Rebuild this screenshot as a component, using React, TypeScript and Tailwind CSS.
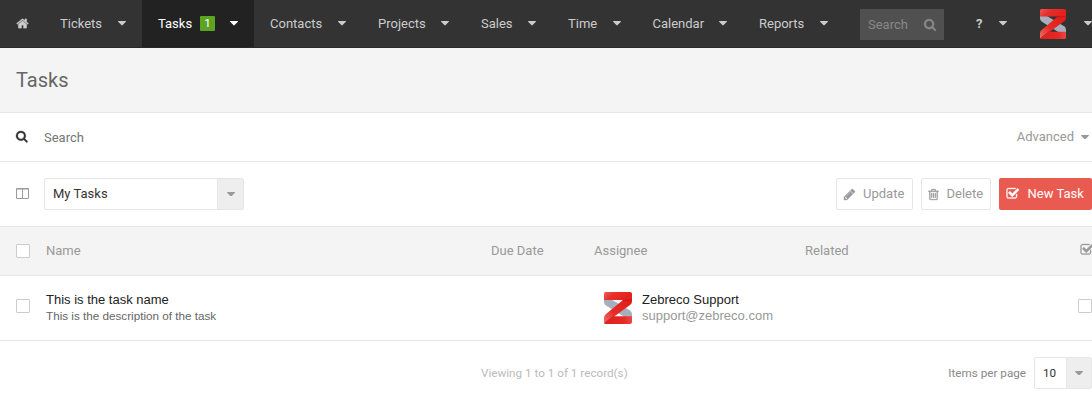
import React from "react";

const ICONS = {
  home: "M1472 992v480q0 26-19 45t-45 19h-384v-384h-256v384h-384q-26 0-45-19t-19-45v-480q0-1 .5-3t.5-3l575-474 575 474q1 2 1 6zm223-69l-62 74q-8 9-21 11h-3q-13 0-21-7l-692-577-692 577q-12 8-24 7-13-2-21-11l-62-74q-8-10-7-23.5t11-21.5l719-599q32-26 76-26t76 26l244 204v-195q0-14 9-23t23-9h192q14 0 23 9t9 23v408l219 182q10 8 11 21.5t-7 23.5z",
  search: "M1152 832q0-185-131.5-316.5t-316.5-131.5-316.5 131.5-131.5 316.5 131.5 316.5 316.5 131.5 316.5-131.5 131.5-316.5zm512 832q0 52-38 90t-90 38q-54 0-90-38l-343-342q-179 124-399 124-143 0-273.5-55.5t-225-150-150-225-55.5-273.5 55.5-273.5 150-225 225-150 273.5-55.5 273.5 55.5 225 150 150 225 55.5 273.5q0 220-124 399l343 343q37 37 37 90z",
  check: "M1472 930v318q0 119-84.5 203.5t-203.5 84.5h-832q-119 0-203.5-84.5t-84.5-203.5v-832q0-119 84.5-203.5t203.5-84.5h832q63 0 117 25 15 7 18 23 3 17-9 29l-49 49q-10 10-23 10-3 0-9-2-23-6-45-6h-832q-66 0-113 47t-47 113v832q0 66 47 113t113 47h832q66 0 113-47t47-113v-254q0-13 9-22l64-64q10-10 23-10 6 0 12 3 20 8 20 29zm231-489l-814 814q-24 24-57 24t-57-24l-430-430q-24-24-24-57t24-57l110-110q24-24 57-24t57 24l263 263 647-647q24-24 57-24t57 24l110 110q24 24 24 57t-24 57z",
  pencil: "M491 1536l91-91-235-235-91 91v107h128v128h107zm523-928q0-22-22-22-10 0-17 7l-542 542q-7 7-7 17 0 22 22 22 10 0 17-7l542-542q7-7 7-17zm-54-192l416 416-832 832h-416v-416zm683 96q0 53-37 90l-166 166-416-416 166-165q36-38 90-38 53 0 91 38l235 234q37 39 37 91z",
  trash: "M704 736v576q0 14-9 23t-23 9h-64q-14 0-23-9t-9-23v-576q0-14 9-23t23-9h64q14 0 23 9t9 23zm256 0v576q0 14-9 23t-23 9h-64q-14 0-23-9t-9-23v-576q0-14 9-23t23-9h64q14 0 23 9t9 23zm256 0v576q0 14-9 23t-23 9h-64q-14 0-23-9t-9-23v-576q0-14 9-23t23-9h64q14 0 23 9t9 23zm128 724v-948h-896v948q0 22 7 40.5t14.5 27 10.5 8.5h832q3 0 10.5-8.5t14.5-27 7-40.5zm-672-1076h448l-48-117q-7-9-17-11h-317q-10 2-17 11zm928 32v64q0 14-9 23t-23 9h-96v948q0 83-47 143.5t-113 60.5h-832q-66 0-113-58.5t-47-141.5v-952h-96q-14 0-23-9t-9-23v-64q0-14 9-23t23-9h309l70-167q15-37 54-63t79-26h320q40 0 79 26t54 63l70 167h309q14 0 23 9t9 23z",
};

function Icon({ name, className = "size-[13px]" }: { name: keyof typeof ICONS; className?: string }) {
  return (
    <svg
      viewBox="0 0 1792 1792"
      fill="currentColor"
      stroke="currentColor"
      strokeWidth="40"
      className={`shrink-0 overflow-visible ${className}`}
    >
      <path d={ICONS[name]} />
    </svg>
  );
}

function Caret({ className = "" }: { className?: string }) {
  return (
    <svg viewBox="384 640 1024 576" fill="currentColor" className={`h-[4.5px] w-2 shrink-0 ${className}`}>
      <path d="M1408 704q0 26-19 45l-448 448q-19 19-45 19t-45-19l-448-448q-19-19-19-45t19-45 45-19h896q26 0 45 19t19 45z" />
    </svg>
  );
}

function Logo({ id, className = "" }: { id: string; className?: string }) {
  return (
    <svg viewBox="0 0 28 32" preserveAspectRatio="none" className={`shrink-0 ${className}`}>
      <defs>
        <linearGradient id={`${id}-top`} x1="0" y1="0" x2="1" y2="0.3">
          <stop offset="0" stopColor="#f05a56" />
          <stop offset="0.4" stopColor="#e6302c" />
          <stop offset="1" stopColor="#e4201b" />
        </linearGradient>
        <linearGradient id={`${id}-mid`} x1="0" y1="1" x2="1" y2="0">
          <stop offset="0" stopColor="#f0706b" />
          <stop offset="0.4" stopColor="#e62b26" />
          <stop offset="1" stopColor="#e01b17" />
        </linearGradient>
        <linearGradient id={`${id}-low`} x1="0" y1="0" x2="1" y2="0">
          <stop offset="0" stopColor="#e11d19" />
          <stop offset="0.7" stopColor="#e62a26" />
          <stop offset="1" stopColor="#ea4844" />
        </linearGradient>
      </defs>
      <path d="M0 7.500h7.500L26 18.500q2 1.500 2 3.500v3h-7.500L2 13.500Q0 12 0 10z" fill="#a5afbd" />
      <path d="M0 31 9 24.200h19V30q0 2-2 2H1.500Q0 32 0 31z" fill={`url(#${id}-low)`} />
      <path d="M28 7v2.500q0 2-2 3.500L1 31.300Q0 31 0 30v-4.500q0-2 2-3.500L19 8z" fill={`url(#${id}-mid)`} />
      <path d="M1.500 0H26q2 0 2 2v6H0V2Q0 0 1.500 0z" fill={`url(#${id}-top)`} />
      <path d="m18.500 8.300 9-.3" stroke="#ae1917" strokeWidth="0.6" />
      <path d="m1 30.700 9-6.700" stroke="#a91c1a" strokeWidth="0.8" />
    </svg>
  );
}

type NavEntry = { label: string; width: string; badge?: number; active?: boolean };

function NavItem({ label, width, badge, active = false }: NavEntry) {
  return (
    <a className={`flex h-full shrink-0 items-center px-4 ${width} ${active ? "bg-[#222] text-white" : "text-[#ccc]"}`}>
      <span>{label}</span>
      {badge !== undefined && (
        <span className="ml-2 flex h-[15px] w-[15px] items-center justify-center rounded-[1px] bg-[#5da423] text-[11.7px] leading-none text-white">
          {badge}
        </span>
      )}
      <Caret className="ml-auto" />
    </a>
  );
}

function Checkbox() {
  return <span className="block size-3.5 shrink-0 rounded-[1px] border border-[#ccc] bg-white" />;
}

const NAV: NavEntry[] = [
  { label: "Tickets", width: "w-[98px]" },
  { label: "Tasks", width: "w-[112px]", badge: 1, active: true },
  { label: "Contacts", width: "w-[108px]" },
  { label: "Projects", width: "w-[103px]" },
  { label: "Sales", width: "w-[87px]" },
  { label: "Time", width: "w-[84.5px]" },
  { label: "Calendar", width: "w-[106.5px]" },
  { label: "Reports", width: "w-[101px]" },
];

const COLUMNS = "grid grid-cols-[46px_445px_103px_211px_273px_14px] items-center border-b border-[#e6e6e6]";

export default function App() {
  return (
    <div className="h-[417px] w-[1092px] overflow-hidden bg-white font-['Roboto',sans-serif] text-[13px] leading-4 text-[#999]">
      <nav className="flex h-12 items-center border-b border-[#2b282b] bg-[#333] text-[#ccc]">
        <a className="flex w-11 shrink-0 pl-[15.500px]">
          <Icon name="home" />
        </a>
        {NAV.map((item) => (
          <NavItem key={item.label} {...item} />
        ))}
        <div className="mt-0.5 ml-4 flex h-[31px] w-[84px] shrink-0 items-center justify-between rounded-[1px] bg-[#505050] pr-[7px] pl-2 text-[#888]">
          <span>Search</span>
          <Icon name="search" />
        </div>
        <a className="ml-4 flex h-full w-[63px] shrink-0 items-center px-4">
          <span className="font-bold">?</span>
          <Caret className="ml-auto" />
        </a>
        <a className="flex h-full shrink-0 items-center pl-[17px]">
          <Logo id="account" className="mt-px h-[30px] w-[26px]" />
          <Caret className="ml-[18px]" />
        </a>
      </nav>

      <header className="flex h-[65px] items-center border-b border-[#e6e6e6] bg-[#f4f4f4] pl-4">
        <h1 className="text-[20px] leading-6 text-[#666]">Tasks</h1>
      </header>

      <section className="flex h-[49px] items-center border-b border-[#e6e6e6] pr-[3px] pl-4">
        <Icon name="search" className="mb-0.5 size-[12.500px] text-[#333]" />
        <span className="mt-0.5 ml-[15.500px] text-[#757575]">Search</span>
        <span className="ml-auto">Advanced</span>
        <Caret className="ml-[7px]" />
      </section>

      <section className="flex h-[65px] items-center border-b border-[#e6e6e6]">
        <svg viewBox="0 0 13 12" className="ml-4 h-3 w-[13px] shrink-0" fill="none" stroke="#999">
          <rect x="0.5" y="0.5" width="12" height="10" rx="0.5" />
          <path d="M0 1h13M6.500 1v9.500" />
        </svg>
        <div className="ml-[15px] flex h-8 w-[200px] rounded-[2px] border border-[#e6e6e6]">
          <span className="flex flex-1 items-center pl-2 text-[#333]">My Tasks</span>
          <span className="flex w-[26px] items-center justify-center border-l border-[#e6e6e6] bg-[#eee]">
            <Caret />
          </span>
        </div>
        <div className="ml-auto flex gap-2">
          <button className="flex h-8 w-[77px] items-center rounded-[2px] border border-[#e6e6e6] pl-1.5">
            <Icon name="pencil" />
            <span className="ml-[7px]">Update</span>
          </button>
          <button className="flex h-8 w-[70px] items-center rounded-[2px] border border-[#e6e6e6] pl-[5px]">
            <Icon name="trash" />
            <span className="ml-[6.500px]">Delete</span>
          </button>
          <button className="flex h-8 w-[93px] items-center rounded-[2px] bg-[#e95a51] pl-[7px] text-white">
            <Icon name="check" className="mb-px size-[13.500px]" />
            <span className="ml-2">New Task</span>
          </button>
        </div>
      </section>

      <div className={`${COLUMNS} h-[49px] bg-[#f4f4f4]`}>
        <span className="pl-4"><Checkbox /></span>
        <span>Name</span>
        <span>Due Date</span>
        <span>Assignee</span>
        <span>Related</span>
        <Icon name="check" className="mb-0.5 ml-[1.500px] size-[13.500px]" />
      </div>

      <div className={`${COLUMNS} h-[65px] font-['Liberation_Sans',sans-serif]`}>
        <span className="pb-1 pl-4"><Checkbox /></span>
        <div>
          <div className="text-[#222]">This is the task name</div>
          <div className="text-[11.7px] text-[#666]">This is the description of the task</div>
        </div>
        <span />
        <div className="flex items-center pl-[10px]">
          <Logo id="assignee" className="h-8 w-7" />
          <div className="ml-2.5">
            <div className="text-[#222]">Zebreco Support</div>
            <div>support@zebreco.com</div>
          </div>
        </div>
        <span />
        <span className="pb-1"><Checkbox /></span>
      </div>

      <footer className="flex h-16 items-center text-[11.7px]">
        <span className="ml-[481px] text-[#bbb]">Viewing 1 to 1 of 1 record(s)</span>
        <span className="ml-auto text-[#888]">Items per page</span>
        <div className="ml-2 flex h-8 w-[58px] rounded-[2px] border border-[#e6e6e6]">
          <span className="flex flex-1 items-center pl-2 text-[#333]">10</span>
          <span className="flex w-[25px] items-center justify-center border-l border-[#e6e6e6] bg-[#eee]">
            <Caret />
          </span>
        </div>
      </footer>
    </div>
  );
}
